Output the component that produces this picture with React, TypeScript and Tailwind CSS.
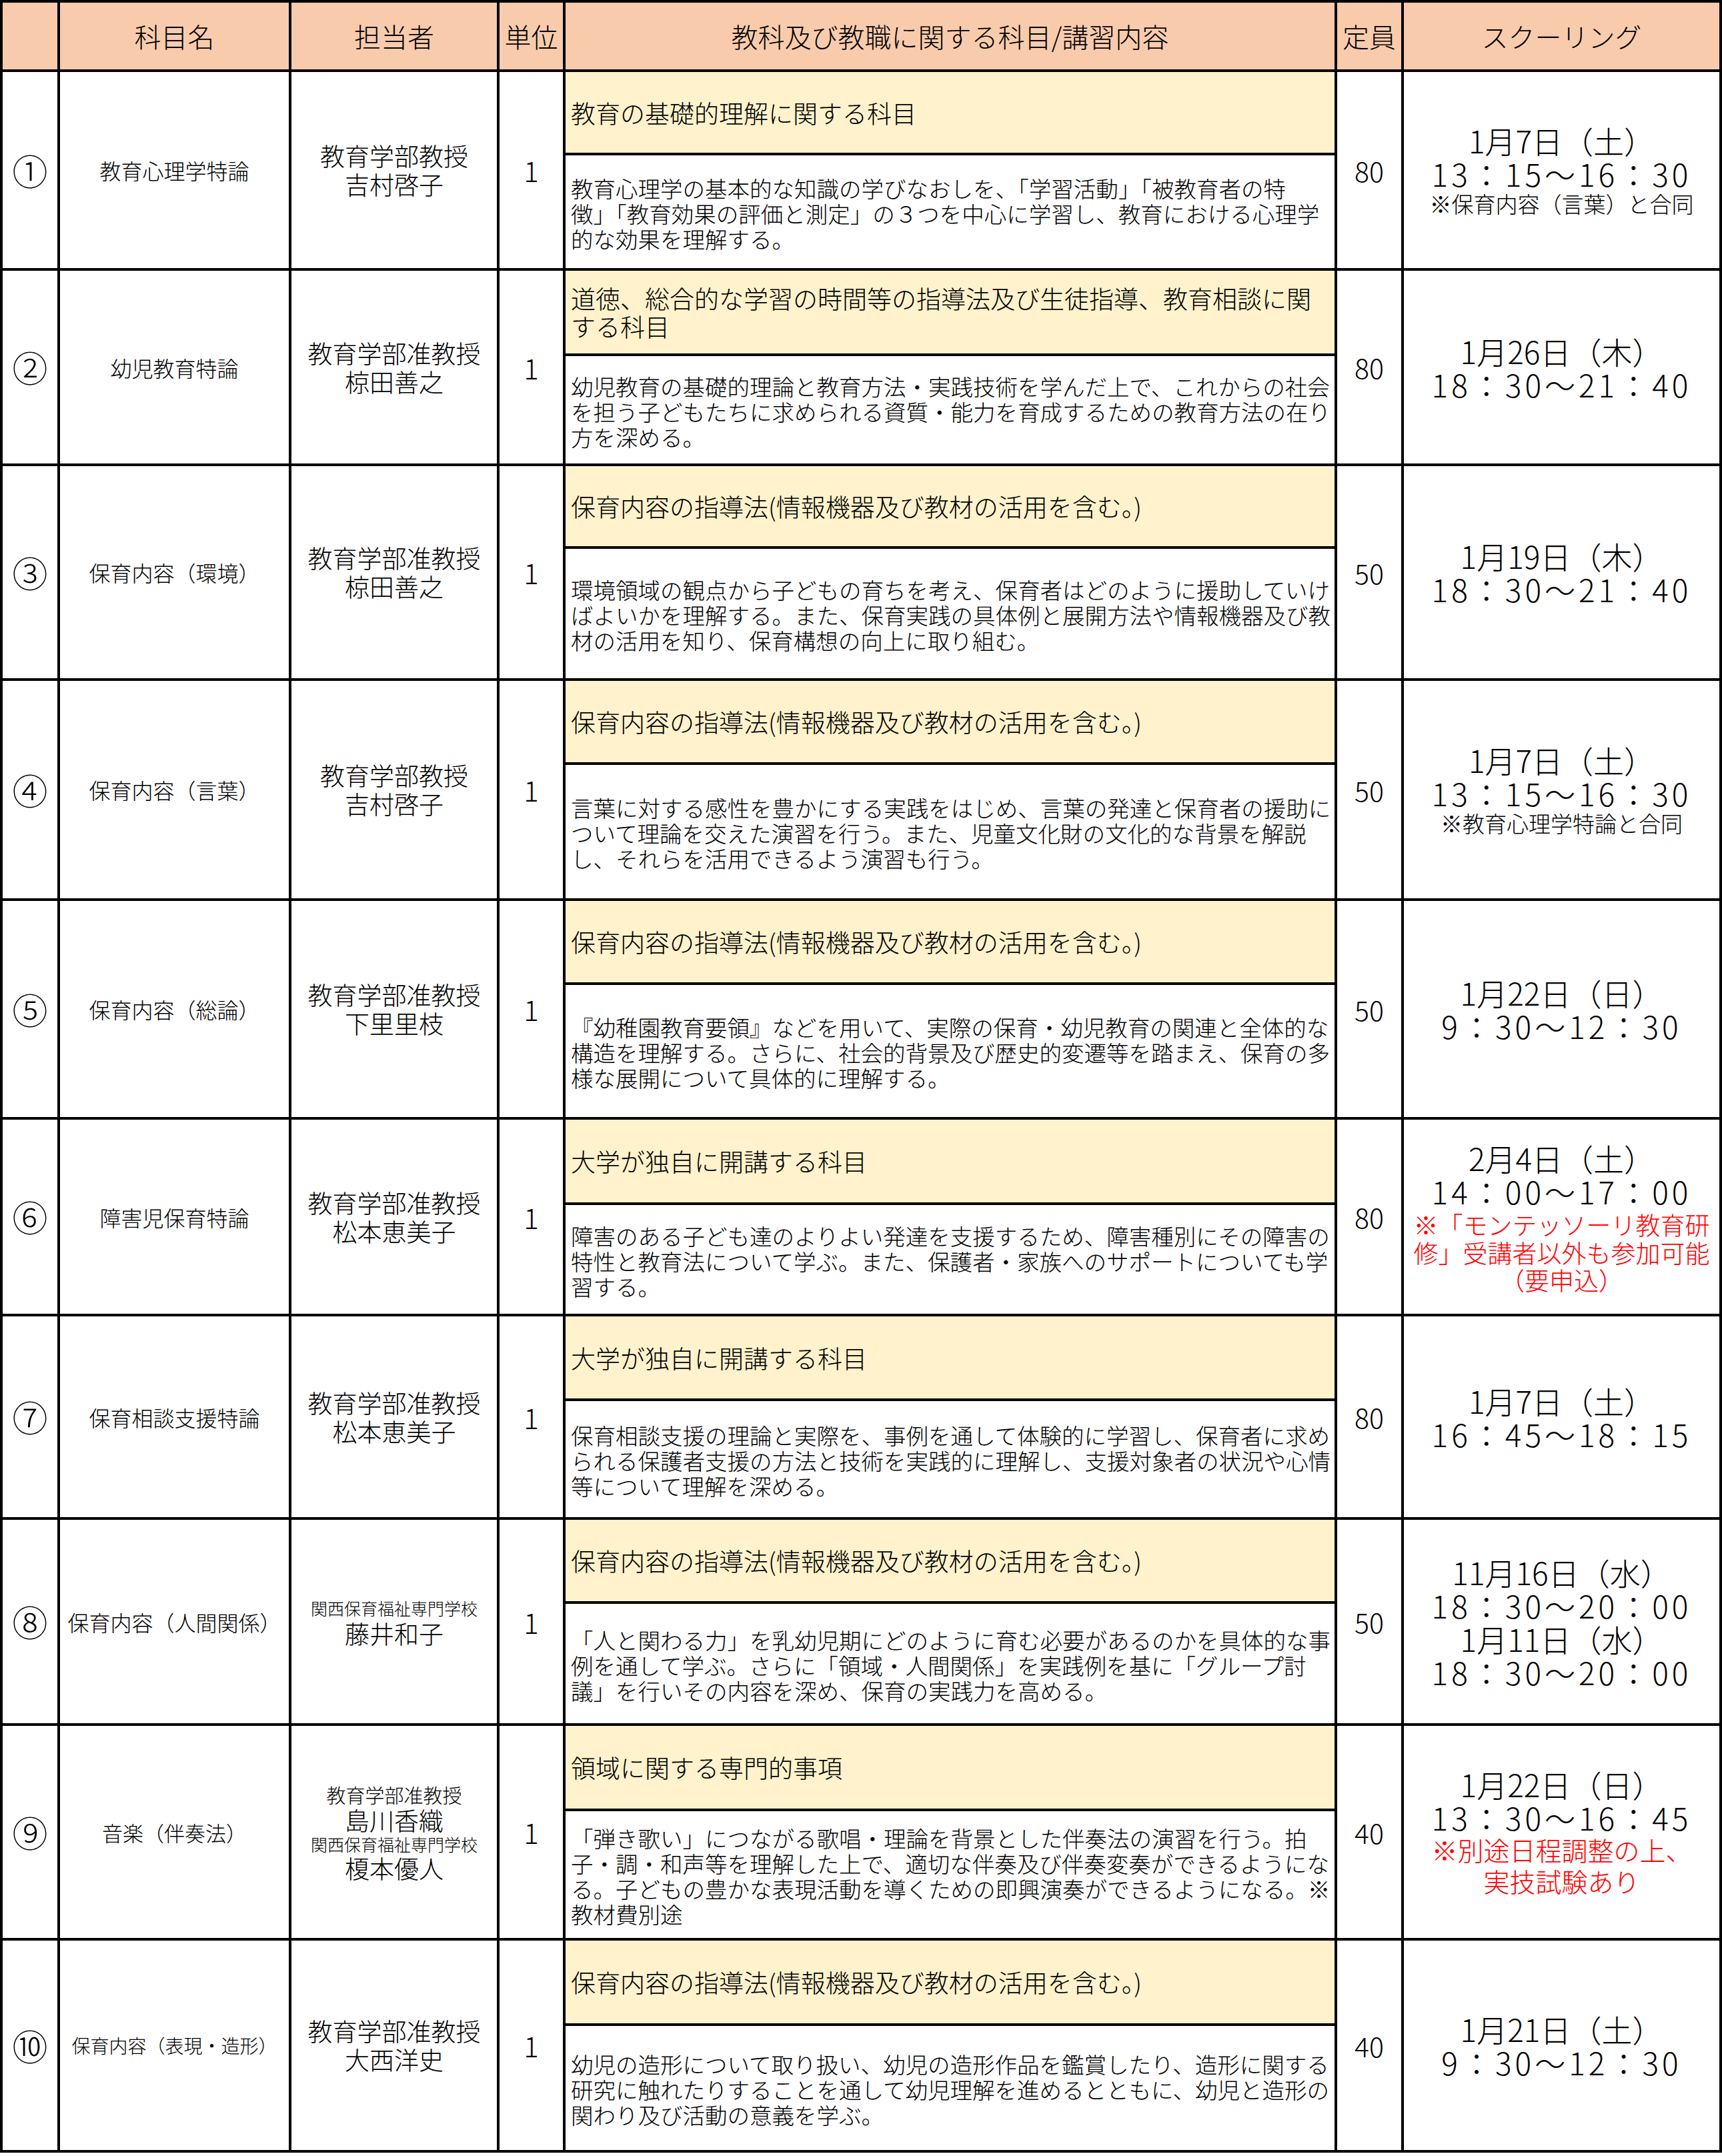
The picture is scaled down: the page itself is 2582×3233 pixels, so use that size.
import React from "react";

type Line = { t: string; c: string };
type Row = {
  no: string;
  subject: string;
  subjectCls: string;
  teacher: Line[];
  head: string[];
  desc: string[];
  quota: string;
  sched: Line[];
  yh: string;
  wh: string;
};

const T37 = "text-[37px] leading-[43px]";
const DATE = "text-[46px] leading-[50px]";
const TIME = "text-[46px] leading-[50px] tracking-[5px]";
const HOIKU = "保育内容の指導法(情報機器及び教材の活用を含む。)";

const rows: Row[] = [
  {
    no: "①",
    subject: "教育心理学特論",
    subjectCls: "text-[32px]",
    teacher: [
      { t: "教育学部教授", c: T37 },
      { t: "吉村啓子", c: T37 },
    ],
    head: ["教育の基礎的理解に関する科目"],
    desc: [
      "教育心理学の基本的な知識の学びなおしを、「学習活動」「被教育者の特",
      "徴」「教育効果の評価と測定」の３つを中心に学習し、教育における心理学",
      "的な効果を理解する。",
    ],
    quota: "80",
    sched: [
      { t: "1月7日（土）", c: DATE },
      { t: "13：15〜16：30", c: TIME },
      { t: "※保育内容（言葉）と合同", c: "text-[33px] leading-[40px]" },
    ],
    yh: "h-[121px]",
    wh: "h-[169px]",
  },
  {
    no: "②",
    subject: "幼児教育特論",
    subjectCls: "text-[32px]",
    teacher: [
      { t: "教育学部准教授", c: T37 },
      { t: "椋田善之", c: T37 },
    ],
    head: ["道徳、総合的な学習の時間等の指導法及び生徒指導、教育相談に関", "する科目"],
    desc: [
      "幼児教育の基礎的理論と教育方法・実践技術を学んだ上で、これからの社会",
      "を担う子どもたちに求められる資質・能力を育成するための教育方法の在り",
      "方を深める。",
    ],
    quota: "80",
    sched: [
      { t: "1月26日（木）", c: DATE },
      { t: "18：30〜21：40", c: TIME },
    ],
    yh: "h-[124px]",
    wh: "h-[161px]",
  },
  {
    no: "③",
    subject: "保育内容（環境）",
    subjectCls: "text-[32px]",
    teacher: [
      { t: "教育学部准教授", c: T37 },
      { t: "椋田善之", c: T37 },
    ],
    head: [HOIKU],
    desc: [
      "環境領域の観点から子どもの育ちを考え、保育者はどのように援助していけ",
      "ばよいかを理解する。また、保育実践の具体例と展開方法や情報機器及び教",
      "材の活用を知り、保育構想の向上に取り組む。",
    ],
    quota: "50",
    sched: [
      { t: "1月19日（木）", c: DATE },
      { t: "18：30〜21：40", c: TIME },
    ],
    yh: "h-[120px]",
    wh: "h-[194px]",
  },
  {
    no: "④",
    subject: "保育内容（言葉）",
    subjectCls: "text-[32px]",
    teacher: [
      { t: "教育学部教授", c: T37 },
      { t: "吉村啓子", c: T37 },
    ],
    head: [HOIKU],
    desc: [
      "言葉に対する感性を豊かにする実践をはじめ、言葉の発達と保育者の援助に",
      "ついて理論を交えた演習を行う。また、児童文化財の文化的な背景を解説",
      "し、それらを活用できるよう演習も行う。",
    ],
    quota: "50",
    sched: [
      { t: "1月7日（土）", c: DATE },
      { t: "13：15〜16：30", c: TIME },
      { t: "※教育心理学特論と合同", c: "text-[33px] leading-[40px]" },
    ],
    yh: "h-[122px]",
    wh: "h-[200px]",
  },
  {
    no: "⑤",
    subject: "保育内容（総論）",
    subjectCls: "text-[32px]",
    teacher: [
      { t: "教育学部准教授", c: T37 },
      { t: "下里里枝", c: T37 },
    ],
    head: [HOIKU],
    desc: [
      "『幼稚園教育要領』などを用いて、実際の保育・幼児教育の関連と全体的な",
      "構造を理解する。さらに、社会的背景及び歴史的変遷等を踏まえ、保育の多",
      "様な展開について具体的に理解する。",
    ],
    quota: "50",
    sched: [
      { t: "1月22日（日）", c: DATE },
      { t: "9：30〜12：30", c: TIME },
    ],
    yh: "h-[122px]",
    wh: "h-[198px]",
  },
  {
    no: "⑥",
    subject: "障害児保育特論",
    subjectCls: "text-[32px]",
    teacher: [
      { t: "教育学部准教授", c: T37 },
      { t: "松本恵美子", c: T37 },
    ],
    head: ["大学が独自に開講する科目"],
    desc: [
      "障害のある子ども達のよりよい発達を支援するため、障害種別にその障害の",
      "特性と教育法について学ぶ。また、保護者・家族へのサポートについても学",
      "習する。",
    ],
    quota: "80",
    sched: [
      { t: "2月4日（土）", c: DATE },
      { t: "14：00〜17：00", c: TIME },
      { t: "※「モンテッソーリ教育研", c: "text-[37px] leading-[42px] text-[#ff0000] mt-[4px]" },
      { t: "修」受講者以外も参加可能", c: "text-[37px] leading-[42px] text-[#ff0000]" },
      { t: "（要申込）", c: "text-[37px] leading-[40px] text-[#ff0000]" },
    ],
    yh: "h-[124px]",
    wh: "h-[163px]",
  },
  {
    no: "⑦",
    subject: "保育相談支援特論",
    subjectCls: "text-[32px]",
    teacher: [
      { t: "教育学部准教授", c: T37 },
      { t: "松本恵美子", c: T37 },
    ],
    head: ["大学が独自に開講する科目"],
    desc: [
      "保育相談支援の理論と実際を、事例を通して体験的に学習し、保育者に求め",
      "られる保護者支援の方法と技術を実践的に理解し、支援対象者の状況や心情",
      "等について理解を深める。",
    ],
    quota: "80",
    sched: [
      { t: "1月7日（土）", c: DATE },
      { t: "16：45〜18：15", c: TIME },
    ],
    yh: "h-[123px]",
    wh: "h-[174px]",
  },
  {
    no: "⑧",
    subject: "保育内容（人間関係）",
    subjectCls: "text-[32px]",
    teacher: [
      { t: "関西保育福祉専門学校", c: "text-[25px] leading-[34px]" },
      { t: "藤井和子", c: "text-[37px] leading-[42px]" },
    ],
    head: [HOIKU],
    desc: [
      "「人と関わる力」を乳幼児期にどのように育む必要があるのかを具体的な事",
      "例を通して学ぶ。さらに「領域・人間関係」を実践例を基に「グループ討",
      "議」を行いその内容を深め、保育の実践力を高める。",
    ],
    quota: "50",
    sched: [
      { t: "11月16日（水）", c: DATE },
      { t: "18：30〜20：00", c: TIME },
      { t: "1月11日（水）", c: DATE },
      { t: "18：30〜20：00", c: TIME },
    ],
    yh: "h-[122px]",
    wh: "h-[179px]",
  },
  {
    no: "⑨",
    subject: "音楽（伴奏法）",
    subjectCls: "text-[31px]",
    teacher: [
      { t: "教育学部准教授", c: "text-[29px] leading-[36px]" },
      { t: "島川香織", c: "text-[37px] leading-[40px]" },
      { t: "関西保育福祉専門学校", c: "text-[25px] leading-[32px]" },
      { t: "榎本優人", c: "text-[37px] leading-[40px]" },
    ],
    head: ["領域に関する専門的事項"],
    desc: [
      "「弾き歌い」につながる歌唱・理論を背景とした伴奏法の演習を行う。拍",
      "子・調・和声等を理解した上で、適切な伴奏及び伴奏変奏ができるようにな",
      "る。子どもの豊かな表現活動を導くための即興演奏ができるようになる。※",
      "教材費別途",
    ],
    quota: "40",
    sched: [
      { t: "1月22日（日）", c: DATE },
      { t: "13：30〜16：45", c: TIME },
      { t: "※別途日程調整の上、", c: "text-[39px] leading-[47px] text-[#ff0000]" },
      { t: "実技試験あり", c: "text-[39px] leading-[47px] text-[#ff0000]" },
    ],
    yh: "h-[124px]",
    wh: "h-[190px]",
  },
  {
    no: "⑩",
    subject: "保育内容（表現・造形）",
    subjectCls: "text-[28px]",
    teacher: [
      { t: "教育学部准教授", c: T37 },
      { t: "大西洋史", c: T37 },
    ],
    head: [HOIKU],
    desc: [
      "幼児の造形について取り扱い、幼児の造形作品を鑑賞したり、造形に関する",
      "研究に触れたりすることを通して幼児理解を進めるとともに、幼児と造形の",
      "関わり及び活動の意義を学ぶ。",
    ],
    quota: "40",
    sched: [
      { t: "1月21日（土）", c: DATE },
      { t: "9：30〜12：30", c: TIME },
    ],
    yh: "h-[124px]",
    wh: "h-[186px]",
  },
];

const headers = ["", "科目名", "担当者", "単位", "教科及び教職に関する科目/講習内容", "定員", "スクーリング"];

export default function App() {
  return (
    <div className="w-[2582px] min-h-[3233px] bg-white text-black font-light font-['Noto_Sans_CJK_JP','Noto_Sans',sans-serif]">
      <div className="grid grid-cols-[82px_343px_308px_95px_1153px_96px_473px] gap-[4px] bg-black p-[4px]">
        {headers.map((h, i) => (
          <div
            key={i}
            className="h-[100px] bg-[#f8cbad] flex items-center justify-center text-[40px] leading-none whitespace-nowrap"
          >
            {h}
          </div>
        ))}
        {rows.map((r, i) => (
          <React.Fragment key={i}>
            <div className="row-span-2 col-start-1 bg-white flex items-center justify-center text-[53px] leading-none">
              {r.no}
            </div>
            <div
              className={`row-span-2 col-start-2 bg-white flex items-center justify-center whitespace-nowrap leading-none ${r.subjectCls}`}
            >
              {r.subject}
            </div>
            <div className="row-span-2 col-start-3 bg-white flex flex-col items-center justify-center whitespace-nowrap">
              {r.teacher.map((l, j) => (
                <div key={j} className={l.c}>
                  {l.t}
                </div>
              ))}
            </div>
            <div className="row-span-2 col-start-4 bg-white flex items-center justify-center text-[42px] leading-none">
              1
            </div>
            <div
              className={`col-start-5 bg-[#fff2cc] flex flex-col justify-center px-[8px] text-[37px] leading-[42px] whitespace-nowrap ${r.yh}`}
            >
              {r.head.map((l, j) => (
                <div key={j}>{l}</div>
              ))}
            </div>
            <div className="row-span-2 col-start-6 bg-white flex items-center justify-center text-[41px] leading-none">
              {r.quota}
            </div>
            <div className="row-span-2 col-start-7 bg-white flex flex-col items-center justify-center whitespace-nowrap">
              {r.sched.map((l, j) => (
                <div key={j} className={l.c}>
                  {l.t}
                </div>
              ))}
            </div>
            <div
              className={`col-start-5 bg-white flex flex-col justify-center px-[8px] pt-[4px] text-[33.5px] leading-[38px] whitespace-nowrap ${r.wh}`}
            >
              {r.desc.map((l, j) => (
                <div key={j}>{l}</div>
              ))}
            </div>
          </React.Fragment>
        ))}
      </div>
    </div>
  );
}
